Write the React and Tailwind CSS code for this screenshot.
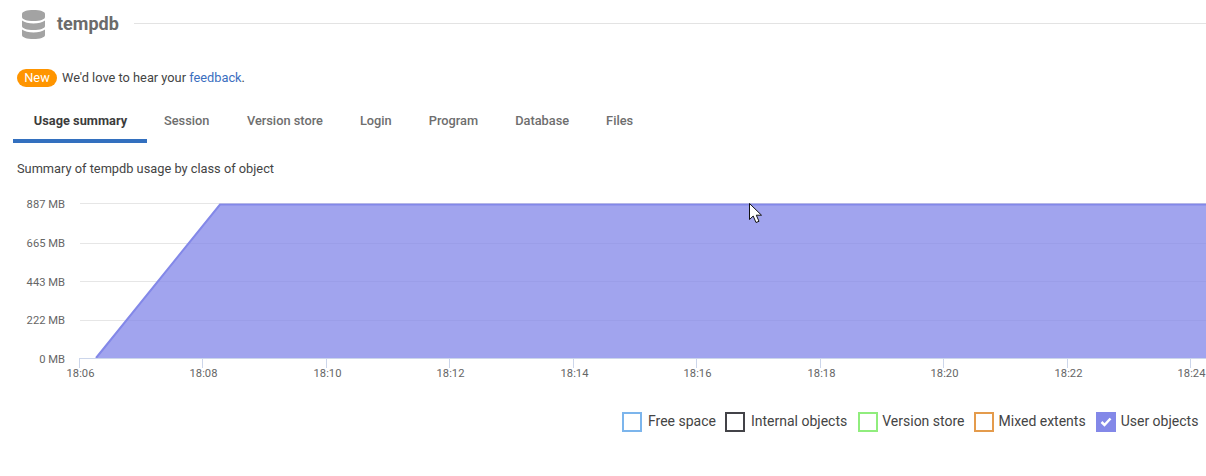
const xTicks = ["18:06","18:08","18:10","18:12","18:14","18:16","18:18","18:20","18:22","18:24"];
const yLines = [203.5,243.5,281.5,320.5];
const yLabels = [["887 MB",208],["665 MB",247],["443 MB",286],["222 MB",324],["0 MB",363]];
const tabs = [["Session","ml-[17px]"],["Version store","ml-[37.5px]"],["Login","ml-[37px]"],["Program","ml-[37px]"],["Database","ml-[37px]"],["Files","ml-[37px]"]];
const legend = [
  ["Free space","border-[#7cb5ec]","mr-[9px]","mr-[6px]"],
  ["Internal objects","border-[#434348]","mr-[11px]","mr-[6px]"],
  ["Version store","border-[#90ed7d]","mr-[9px]","mr-[4px]"],
  ["Mixed extents","border-[#e49b4c]","mr-[10px]","mr-[5px]"],
];

function Chart() {
  return (
    <svg width="1206" height="200" viewBox="0 190 1206 200" className="block" style={{fontFamily:"Roboto, sans-serif"}}>
      {yLines.map(y => <line key={y} x1="80" x2="1206" y1={y} y2={y} stroke="#e6e6e6" />)}
      <polygon points="96,358 220,204 1206,204 1206,358" fill="#8388e8" fillOpacity="0.76" />
      <polyline points="96,358 220,204.5 1206,204.5" fill="none" stroke="#8388e8" strokeWidth="2" />
      <line x1="79" x2="1206" y1="358.5" y2="358.5" stroke="#ccd6eb" />
      {xTicks.map((t,i) => {
        const x = Math.floor(79 + i*123.5) + 0.5;
        return <g key={t}>
          <line x1={x} x2={x} y1="358" y2="368" stroke="#ccd6eb" />
          <text x={x + 1} y="377" textAnchor="middle" fontSize="11.2" fill="#666666">{t}</text>
        </g>;
      })}
      {yLabels.map(([l,y]) => <text key={l} x="65" y={y} textAnchor="end" fontSize="11.2" fill="#666666">{l}</text>)}
    </svg>
  );
}

export default function App() {
  return (
    <div className="w-[1206px] h-[476px] overflow-hidden bg-white relative font-['Roboto',sans-serif]">
      <header className="h-[47px] flex items-center pl-[22px]">
        <svg width="23" height="29" viewBox="0 0 23 29" className="shrink-0 mt-[1px]">
          <path d="M0 4C0 1.5 5 0 11.5 0S23 1.5 23 4v3c0 2.5-5 4-11.5 4S0 9.500 0 7z" fill="#a3a3a3"/>
          <path d="M0 10.500c2.500 2 7 3 11.500 3s9-1 11.500-3V16c0 2.500-5 4-11.500 4S0 18.500 0 16z" fill="#a3a3a3"/>
          <path d="M0 19.500c2.500 2 7 3 11.500 3s9-1 11.500-3V25c0 2.500-5 4-11.500 4S0 27.500 0 25z" fill="#a3a3a3"/>
        </svg>
        <h1 className="ml-3 text-[18px] font-bold text-[#6b6b6b] leading-none">tempdb</h1>
        <div className="ml-[15px] flex-1 h-px bg-[#e3e3e3]" />
      </header>
      <div className="mt-[22px] pl-[17px] flex items-center h-[18px] text-[12.8px] leading-none text-[#444444]">
        <span className="w-10 h-[18px] rounded-full bg-[#ff9500] text-white text-[12.8px] pt-[1px] flex items-center justify-center">New</span>
        <span className="ml-[5px] mt-[1px]">We'd love to hear your <a className="text-[#3b6fbf]">feedback</a>.</span>
      </div>
      <nav className="mt-[11px] ml-[13px] flex h-[46px] text-[12.8px] font-medium text-[#6e6e6e]">
        <div className="w-[134px] h-[46px] -mt-[1px] pt-[5px] pl-[1px] border-b-4 border-[#3370bf] flex items-center justify-center font-bold text-[#3c3c3c]">Usage summary</div>
        {tabs.map(([t,m]) => <div key={t} className={`${m} flex items-center pb-[3px] -mt-[1px] pt-[3px]`}>{t}</div>)}
      </nav>
      <p className="mt-[16px] ml-[17px] text-[12.8px] leading-[18px] text-[#444444]">Summary of tempdb usage by class of object</p>
      <div className="mt-[12px]"><Chart /></div>
      <div className="absolute left-[622px] top-[412px] flex items-center h-5 text-[14px] text-[#444444]">
        {legend.map(([l,c,m,g]) => (
          <div key={l} className={`flex items-center ${m}`}>
            <span className={`w-5 h-5 border-2 ${c} ${g}`} />
            <span className="-mt-[2px]">{l}</span>
          </div>
        ))}
        <div className="flex items-center">
          <span className="w-5 h-5 bg-[#8388e8] mr-[5px] flex items-center justify-center">
            <svg width="12" height="10" viewBox="0 0 12 10"><path d="M1.500 5l3 3L10.500 1.500" fill="none" stroke="#fff" strokeWidth="2.500"/></svg>
          </span>
          <span className="-mt-[2px]">User objects</span>
        </div>
      </div>
      <svg width="15" height="21" viewBox="0 0 15 21" className="absolute left-[749px] top-[203px]">
        <path d="M0.500 0.500V16.500L4.200 13L7 19.500L10 18.300L7.300 12.200H12.500z" fill="#fff" stroke="#111" strokeWidth="1"/>
      </svg>
    </div>
  );
}
